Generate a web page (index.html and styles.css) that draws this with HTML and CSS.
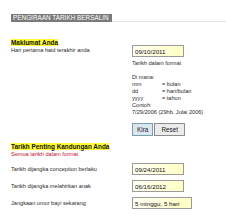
FILE: index.html
```html
<!DOCTYPE html>
<html lang="ms">
    <head>
        <meta charset="UTF-8">
        <title>Pengiraan Tarikh Bersalin</title>
        <link rel="stylesheet" href="styles.css">
    </head>
    <body>
        <div class="page">
            <div class="tajuk">
                <span class="tajuk_txt">PENGIRAAN TARIKH BERSALIN</span>
                <span class="tajuk_garis"></span>
            </div>

            <div class="bahagian satu">
                <div class="kiri">
                    <div class="sub"><span class="hl">Maklumat Anda</span></div>
                    <div class="label">Hari pertama haid terakhir anda</div>
                </div>
                <div class="kanan">
                    <input class="kotak" type="text" value="09/10/2011">
                    <div class="nota">Tarikh dalam format</div>
                    <div class="format">
                        <div>Di mana:</div>
                        <div class="f_row"><span>mm</span><span>= bulan</span></div>
                        <div class="f_row"><span>dd</span><span>= hari/bulan</span></div>
                        <div class="f_row"><span>yyyy</span><span>= tahun</span></div>
                        <div>Contoh:</div>
                        <div>7/29/2006 (29hb. Julai 2006)</div>
                    </div>
                    <div class="butang">
                        <button class="btn kira">Kira</button>
                        <button class="btn">Reset</button>
                    </div>
                </div>
            </div>

            <div class="bahagian dua">
                <div class="sub"><span class="hl">Tarikh Penting Kandungan Anda</span></div>
                <div class="merah">Semua tarikh dalam format</div>
                <div class="baris">
                    <div class="label">Tarikh dijangka conception berlaku</div>
                    <input class="kotak" type="text" value="09/24/2011">
                </div>
                <div class="baris">
                    <div class="label">Tarikh dijangka melahirkan anak</div>
                    <input class="kotak" type="text" value="06/16/2012">
                </div>
                <div class="baris">
                    <div class="label">Jangkaan umur bayi sekarang</div>
                    <input class="kotak lebar" type="text" value="5 minggu, 5 hari">
                </div>
            </div>
        </div>
    </body>
</html>
```

FILE: styles.css
```css
body {
    margin: 0;
    background: #fff;
    font-family: "Liberation Sans", Arial, sans-serif;
    font-size: 5.6px;
    color: #2a2a2a;
}
.page {
    padding: 14px 0 0 11px;
}
.tajuk {
    display: flex;
    align-items: flex-end;
}
.tajuk_txt {
    background: #7a7a7a;
    color: #fff;
    font-size: 6.4px;
    line-height: 8px;
    padding: 0 2px;
    width: 97px;
    white-space: nowrap;
}
.tajuk_garis {
    flex: 1;
    height: 1px;
    background: #e4e4e4;
}
.bahagian {
    display: grid;
    grid-template-columns: 121px 1fr;
}
.satu {
    margin-top: 17px;
}
.sub {
    font-weight: bold;
    font-size: 6.4px;
    line-height: 8px;
    color: #111;
}
.hl {
    background: #ffff33;
}
.label {
    line-height: 7px;
}
.kanan {
    padding-top: 6px;
}
.kotak {
    display: block;
    box-sizing: border-box;
    width: 52px;
    height: 12px;
    margin: 0;
    padding: 0 2px;
    border: 1px solid #9a9a9a;
    background: linear-gradient(to right, #fffff4, #ffffc4);
    font-family: "Liberation Sans", Arial, sans-serif;
    font-size: 6.2px;
    color: #111;
}
.kotak.lebar {
    width: 60px;
}
.nota {
    line-height: 7px;
    margin-top: 3px;
}
.format {
    margin-top: 7px;
    line-height: 7px;
}
.f_row {
    display: grid;
    grid-template-columns: 30px 1fr;
}
.butang {
    display: flex;
    gap: 1px;
    margin-top: 7px;
}
.btn {
    height: 13px;
    margin: 0;
    padding: 0 6px;
    border: 1px solid #8c8c8c;
    background: #ececec;
    font-family: "Liberation Sans", Arial, sans-serif;
    font-size: 6.4px;
    color: #222;
}
.btn.kira {
    padding: 0 4px;
    background: #dbe7ef;
    border-color: #7a9bb0;
}
.dua {
    display: block;
    margin-top: 7px;
}
.merah {
    color: #c8102e;
    line-height: 7px;
}
.baris {
    display: grid;
    grid-template-columns: 121px 1fr;
    align-items: center;
    margin-top: 5px;
}
.baris + .baris {
    margin-top: 5px;
}
```
